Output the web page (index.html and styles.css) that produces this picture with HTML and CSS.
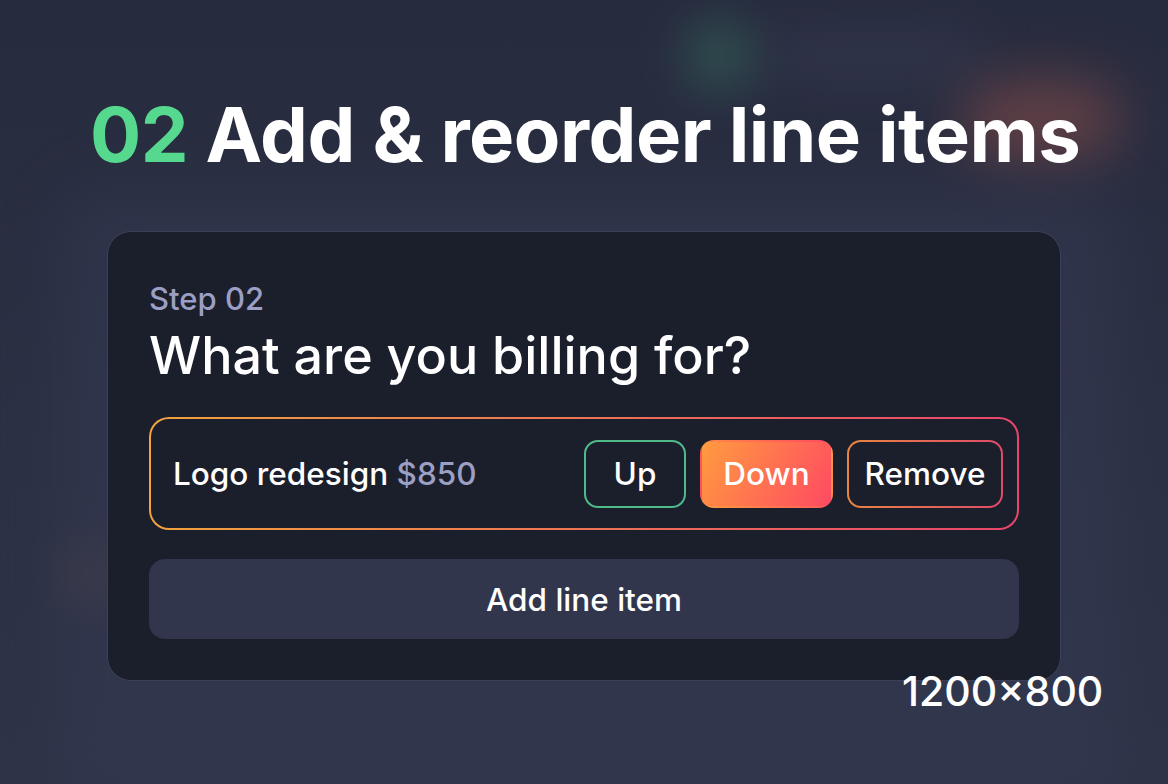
FILE: index.html
```html
<!DOCTYPE html>
<html lang="en">
<head>
  <meta charset="UTF-8" />
  <meta name="viewport" content="width=device-width, initial-scale=1.0" />
  <title>Add &amp; reorder line items</title>
  <link rel="stylesheet" href="styles.css">
</head>
<body>
  <div class="backdrop">
    <span class="blob blob-green"></span>
    <span class="blob blob-red"></span>
    <span class="blob blob-bar"></span>
    <span class="blob blob-panel"></span>
    <span class="blob blob-amber"></span>
  </div>

  <div class="slide">
    <h1 class="headline"><span class="num">02</span> Add &amp; reorder line items</h1>

    <div class="card">
      <div class="step">Step 02</div>
      <h2 class="question">What are you billing for?</h2>

      <div class="item">
        <div class="item-label">Logo redesign <span class="price">$850</span></div>
        <div class="actions">
          <button class="btn btn-up">Up</button>
          <button class="btn btn-down">Down</button>
          <button class="btn btn-remove">Remove</button>
        </div>
      </div>

      <button class="add">Add line item</button>
    </div>

    <div class="size">1200×800</div>
  </div>
</body>
</html>
```

FILE: styles.css
```css
* {
  box-sizing: border-box;
}
html, body {
  height: 100%;
}
body {
  margin: 0;
  overflow: hidden;
  font-family: 'Inter', 'Noto Sans', sans-serif;
  color: #fff;
  background: linear-gradient(180deg, #272b3e 0%, #2b3044 55%, #2e3348 100%);
  position: relative;
}

/* blurred app behind the slide */
.backdrop {
  position: absolute;
  inset: 0;
  overflow: hidden;
}
.blob {
  position: absolute;
  border-radius: 40px;
  filter: blur(28px);
}
.blob-green {
  left: 695px; top: 30px;
  width: 50px; height: 50px;
  border-radius: 50%;
  background: #3f9270;
  opacity: .75;
}
.blob-red {
  left: 960px; top: 80px;
  width: 160px; height: 80px;
  background: #7a4848;
  opacity: .7;
}
.blob-bar {
  left: 770px; top: 40px;
  width: 210px; height: 30px;
  background: #3b4058;
  opacity: .8;
}
.blob-panel {
  left: 60px; top: 190px;
  width: 1060px; height: 620px;
  background: #343a52;
  opacity: .5;
}
.blob-amber {
  left: 70px; top: 555px;
  width: 40px; height: 40px;
  border-radius: 50%;
  background: #6a5548;
  opacity: .6;
}

.slide {
  position: relative;
  padding: 88px 0 0 90px;
}
.headline {
  margin: 0;
  font-size: 76px;
  font-weight: 700;
  letter-spacing: -0.5px;
  line-height: 92px;
}
.num {
  color: #56d98e;
}

.card {
  margin: 51px 0 0 17px;
  width: 954px;
  height: 450px;
  padding: 48px 41px 0;
  background: #1b1e2b;
  border: 1.5px solid #3b4058;
  border-radius: 24px;
}
.step {
  font-size: 31px;
  font-weight: 500;
  color: #9c9fc4;
  line-height: 38px;
}
.question {
  margin: 7px 0 0;
  font-size: 52px;
  font-weight: 500;
  line-height: 61px;
}

.item {
  margin-top: 31px;
  height: 113px;
  display: flex;
  align-items: center;
  justify-content: space-between;
  padding: 0 14px 0 22px;
  border: 2px solid transparent;
  border-radius: 20px;
  background:
    linear-gradient(#1b1e2b, #1b1e2b) padding-box,
    linear-gradient(90deg, #f2a23e, #e9456c) border-box;
}
.item-label {
  font-size: 31.5px;
  font-weight: 500;
}
.price {
  color: #9c9fc4;
}
.actions {
  display: flex;
  gap: 14px;
}
.btn {
  height: 68px;
  padding: 0;
  font-family: inherit;
  font-size: 31.5px;
  font-weight: 500;
  color: #fff;
  border-radius: 14px;
  border: 2px solid transparent;
  background: #1b1e2b;
}
.btn-up {
  width: 102px;
  border-color: #4fbb8b;
}
.btn-down {
  width: 133px;
  background: linear-gradient(120deg, #ff9b3f 0%, #ff4a62 100%);
}
.btn-remove {
  width: 156px;
  background:
    linear-gradient(#1b1e2b, #1b1e2b) padding-box,
    linear-gradient(90deg, #e9853f, #e04a6a) border-box;
}

.add {
  display: block;
  width: 100%;
  height: 80px;
  margin-top: 29px;
  border: none;
  border-radius: 16px;
  background: #31364d;
  color: #fff;
  font-family: inherit;
  font-size: 31.5px;
  font-weight: 500;
}

.size {
  position: absolute;
  left: 902px;
  top: 666px;
  font-size: 41px;
  font-weight: 500;
}
```
